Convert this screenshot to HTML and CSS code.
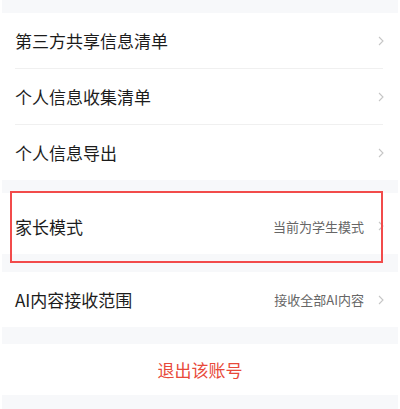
FILE: index.html
```html
<!DOCTYPE html>
<html lang="zh-CN">
<head>
<meta charset="utf-8">
<link rel="stylesheet" href="styles.css">
<title>设置</title>
</head>
<body>
<div class="page">
  <div class="band band-top"></div>
  <div class="group">
    <div class="row"><span class="label">第三方共享信息清单</span><span class="right"><svg class="chev" viewBox="0 0 6 10" width="6" height="10"><polyline points="1,1 5,5 1,9"/></svg></span></div>
    <div class="divider"></div>
    <div class="row"><span class="label">个人信息收集清单</span><span class="right"><svg class="chev" viewBox="0 0 6 10" width="6" height="10"><polyline points="1,1 5,5 1,9"/></svg></span></div>
    <div class="divider"></div>
    <div class="row"><span class="label">个人信息导出</span><span class="right"><svg class="chev" viewBox="0 0 6 10" width="6" height="10"><polyline points="1,1 5,5 1,9"/></svg></span></div>
  </div>
  <div class="band band-a"></div>
  <div class="highlight-wrap">
    <div class="row row-parent"><span class="label">家长模式</span><span class="right"><span class="value">当前为学生模式</span><svg class="chev" viewBox="0 0 6 10" width="6" height="10"><polyline points="1,1 5,5 1,9"/></svg></span></div>
    <div class="band band-b"></div>
    <div class="mark"></div>
  </div>
  <div class="row row-ai"><span class="label">AI内容接收范围</span><span class="right"><span class="value">接收全部AI内容</span><svg class="chev" viewBox="0 0 6 10" width="6" height="10"><polyline points="1,1 5,5 1,9"/></svg></span></div>
  <div class="band band-c"></div>
  <div class="logout">退出该账号</div>
  <div class="band band-d"></div>
</div>
</body>
</html>
```
FILE: styles.css
```css
html, body {
  margin: 0;
  padding: 0;
  background: #ffffff;
}
body {
  font-family: "Noto Sans CJK SC", "Noto Sans", sans-serif;
  width: 400px;
  height: 409px;
  overflow: hidden;
}
.page {
  display: flex;
  flex-direction: column;
}
.band {
  background: #f7f8fa;
  margin: 0 2px;
}
.band-top { height: 13px; }
.band-a { height: 13px; }
.band-b { height: 18px; }
.band-c { height: 17px; }
.band-d { height: 14px; }

.group {
  display: flex;
  flex-direction: column;
  background: #fff;
}
.divider {
  height: 1px;
  background: #f0f0f0;
  margin: 0 17px 0 15px;
}
.row {
  display: flex;
  align-items: center;
  justify-content: space-between;
  height: 55px;
  padding: 0 16px 0 15px;
  background: #fff;
}
.label {
  font-size: 17px;
  color: #1c1c1c;
}
.right {
  display: flex;
  align-items: center;
  gap: 14px;
}
.value {
  font-size: 13px;
  color: #666666;
}
.chev {
  display: block;
}
.chev polyline {
  fill: none;
  stroke: #c6c6c6;
  stroke-width: 1.1;
}
.row-parent {
  height: 61px;
  box-sizing: border-box;
  padding-top: 5px;
}
.highlight-wrap {
  position: relative;
  display: flex;
  flex-direction: column;
}
.mark {
  position: absolute;
  left: 10px;
  top: -2px;
  width: 373px;
  height: 72px;
  box-sizing: border-box;
  border: 2px solid #f24b4b;
  pointer-events: none;
}
.logout {
  height: 51px;
  display: flex;
  align-items: center;
  justify-content: center;
  font-size: 17px;
  color: #e8493a;
  background: #fff;
}
```
